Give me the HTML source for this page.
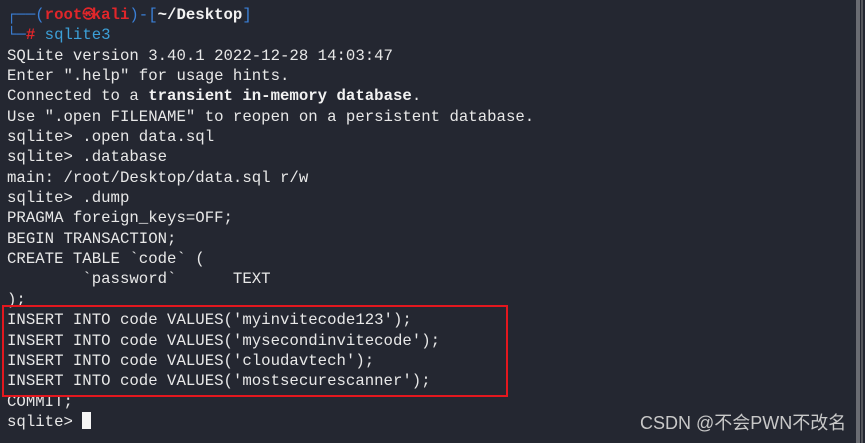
<!DOCTYPE html>
<html><head><meta charset="utf-8"><style>
html,body{margin:0;padding:0;}
body{width:865px;height:443px;background:#242731;overflow:hidden;position:relative;
font-family:"Liberation Mono","DejaVu Sans Mono",monospace;font-size:15.7px;color:#e8e8e8;}
.t{position:absolute;left:7px;top:4px;line-height:20.35px;white-space:pre;}
.b{color:#3a7fd6}.r{color:#e0262a;font-weight:bold}.w{font-weight:bold;color:#f2f2f2}
.c{color:#3ca0d8}
.sk{display:inline-block;width:9.42px;text-align:center;font-size:12px;font-family:"DejaVu Sans",sans-serif;overflow:visible;vertical-align:1px;}
.box{position:absolute;left:2px;top:305px;width:502px;height:88px;border:2px solid #e3171e;}
.cur{display:inline-block;width:9px;height:17px;background:#f5f5f5;vertical-align:-3px;}
.wm{position:absolute;left:640px;top:409px;font-family:"Liberation Sans","Noto Sans CJK SC",sans-serif;font-size:18px;color:#c8c8c8;}
.sb{position:absolute;left:856px;top:0;width:4px;height:443px;background:#6a6c72;}
.sb2{position:absolute;left:861px;top:0;width:2px;height:443px;background:#55575c;}
</style></head><body>
<div class="t"><span class="b">┌──(</span><span class="r">root<span class="sk">㉿</span>kali</span><span class="b">)-[</span><span class="w">~/Desktop</span><span class="b">]</span>
<span class="b">└─</span><span class="r">#</span> <span class="c">sqlite3</span>
SQLite version 3.40.1 2022-12-28 14:03:47
Enter ".help" for usage hints.
Connected to a <b class="w">transient in-memory database</b>.
Use ".open FILENAME" to reopen on a persistent database.
sqlite&gt; .open data.sql
sqlite&gt; .database
main: /root/Desktop/data.sql r/w
sqlite&gt; .dump
PRAGMA foreign_keys=OFF;
BEGIN TRANSACTION;
CREATE TABLE `code` (
        `password`      TEXT
);
INSERT INTO code VALUES('myinvitecode123');
INSERT INTO code VALUES('mysecondinvitecode');
INSERT INTO code VALUES('cloudavtech');
INSERT INTO code VALUES('mostsecurescanner');
COMMIT;
sqlite&gt; <span class="cur"></span></div>
<div class="box"></div>
<div class="wm">CSDN @不会PWN不改名</div>
<div class="sb"></div><div class="sb2"></div>
</body></html>
